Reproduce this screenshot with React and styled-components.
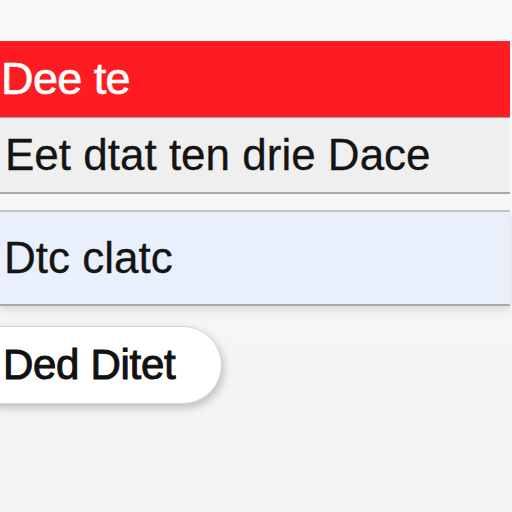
import React from 'react';
import styled, { createGlobalStyle } from 'styled-components';

const GlobalStyle = createGlobalStyle`
  html, body {
    margin: 0;
    padding: 0;
    background: #f5f5f5;
  }
  body {
    font-family: 'Liberation Sans', Arial, sans-serif;
  }
`;

const Page = styled.div`
  width: 512px;
  height: 512px;
  overflow: hidden;
  padding-top: 41px;
  box-sizing: border-box;
  background: linear-gradient(#fafafa, #f3f3f3);
`;

const Header = styled.div`
  height: 76px;
  margin-right: 2px;
  background: #fe1c22;
  color: #ffffff;
  display: flex;
  align-items: center;
  padding-left: 1px;
  font-size: 45px;
  letter-spacing: -0.6px;
  -webkit-text-stroke: 0.6px #ffffff;
  border-bottom: 1px solid #9aa6aa;
  box-shadow: 0 2px 0 #cfe6ea;
`;

const Row = styled.div`
  display: flex;
  align-items: center;
  margin-right: 2px;
  padding-left: ${(p) => p.$indent || 4}px;
  font-size: 44px;
  color: #141414;
  -webkit-text-stroke: 0.3px #141414;
  background: ${(p) => p.$bg};
  height: ${(p) => p.$height}px;
  margin-top: ${(p) => p.$gap || 0}px;
  border-top: ${(p) => (p.$topLine ? '2px solid #c4c4c4' : 'none')};
  border-bottom: 2px solid #a9a9a9;
  box-shadow: ${(p) => (p.$shadow ? '0 4px 8px rgba(0,0,0,0.12)' : 'none')};
`;

const Pill = styled.button`
  display: flex;
  align-items: center;
  margin-top: 20px;
  margin-left: -40px;
  width: 262px;
  height: 78px;
  padding: 0 0 0 42px;
  border: 1px solid #d6d6d6;
  border-radius: 40px;
  background: #ffffff;
  box-shadow: 2px 4px 8px rgba(0, 0, 0, 0.22);
  font-family: 'Liberation Sans', Arial, sans-serif;
  font-size: 42px;
  font-weight: 400;
  -webkit-text-stroke: 1px #111111;
  color: #111111;
  letter-spacing: -0.3px;
`;

export default function App() {
  return (
    <>
      <GlobalStyle />
      <Page>
        <Header>Dee te</Header>
        <Row $bg="#efefef" $height={74} $indent={5}>
          Eet dtat ten drie Dace
        </Row>
        <Row $bg="#e9f0fb" $height={92} $gap={16} $topLine $shadow $indent={4}>
          Dtc clatc
        </Row>
        <Pill>Ded Ditet</Pill>
      </Page>
    </>
  );
}
